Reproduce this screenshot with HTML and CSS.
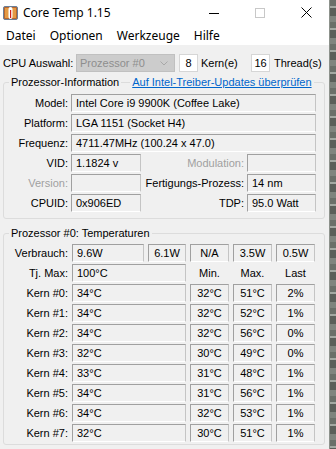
FILE: index.html
```html
<!DOCTYPE html>
<html lang="de">
<head>
    <meta charset="UTF-8">
    <meta name="viewport" content="width=device-width, initial-scale=1.0">
    <title>Core Temp 1.15</title>
    <link rel="stylesheet" href="styles.css">
</head>
<body>
    <div class="screen">
        <div class="window">
            <div class="titlebar">
                <svg class="app-icon" viewBox="0 0 15 16" width="15" height="16">
                    <rect x="0.5" y="1.5" width="14" height="13" rx="1.5" fill="#b8662e" stroke="#6a7f98"/>
                    <rect x="2" y="3" width="11" height="10" fill="#e49a44"/>
                    <rect x="5.5" y="2" width="4" height="12" rx="2" fill="#fff"/>
                    <rect x="7" y="5" width="1.2" height="8" fill="#d0201c"/>
                </svg>
                <span class="title">Core Temp 1.15</span>
                <div class="controls">
                    <span class="ctl">
                        <svg width="10" height="10" viewBox="0 0 10 10"><line x1="0" y1="5.5" x2="10" y2="5.5" stroke="#000" stroke-width="1"/></svg>
                    </span>
                    <span class="ctl">
                        <svg width="10" height="10" viewBox="0 0 10 10"><rect x="0.5" y="0.5" width="9" height="9" fill="none" stroke="#c8c8c8" stroke-width="1"/></svg>
                    </span>
                    <span class="ctl">
                        <svg width="11" height="11" viewBox="0 0 11 11"><path d="M0.5 0.5 L10.5 10.5 M10.5 0.5 L0.5 10.5" stroke="#000" stroke-width="1"/></svg>
                    </span>
                </div>
            </div>

            <div class="menubar">
                <span>Datei</span>
                <span>Optionen</span>
                <span>Werkzeuge</span>
                <span>Hilfe</span>
            </div>

            <div class="content">
                <div class="toolbar">
                    <span class="tb-label">CPU Auswahl:</span>
                    <div class="select">
                        <span>Prozessor #0</span>
                        <svg width="8" height="5" viewBox="0 0 8 5"><polyline points="0.5,0.5 4,4 7.5,0.5" fill="none" stroke="#a8a8a8" stroke-width="1"/></svg>
                    </div>
                    <span class="num">8</span>
                    <span class="tb-unit">Kern(e)</span>
                    <span class="num">16</span>
                    <span class="tb-unit2">Thread(s)</span>
                </div>

                <fieldset class="group info">
                    <legend>
                        <span class="legend-text">Prozessor-Information</span>
                        <span class="legend-rule"></span>
                        <a class="legend-link" href="#">Auf Intel-Treiber-Updates überprüfen</a>
                    </legend>
                    <div class="info-grid">
                        <span class="lbl">Model:</span>
                        <span class="box wide">Intel Core i9 9900K (Coffee Lake)</span>

                        <span class="lbl">Platform:</span>
                        <span class="box wide">LGA 1151 (Socket H4)</span>

                        <span class="lbl">Frequenz:</span>
                        <span class="box wide">4711.47MHz (100.24 x 47.0)</span>

                        <span class="lbl">VID:</span>
                        <span class="box">1.1824 v</span>
                        <span class="lbl off">Modulation:</span>
                        <span class="box"></span>

                        <span class="lbl off">Version:</span>
                        <span class="box"></span>
                        <span class="lbl">Fertigungs-Prozess:</span>
                        <span class="box">14 nm</span>

                        <span class="lbl">CPUID:</span>
                        <span class="box">0x906ED</span>
                        <span class="lbl">TDP:</span>
                        <span class="box">95.0 Watt</span>
                    </div>
                </fieldset>

                <fieldset class="group temps">
                    <legend><span class="legend-text">Prozessor #0: Temperaturen</span></legend>
                    <div class="temp-grid">
                        <span class="lbl">Verbrauch:</span>
                        <span class="box">9.6W</span>
                        <span class="box mid">6.1W</span>
                        <span class="box mid">N/A</span>
                        <span class="box mid">3.5W</span>
                        <span class="box mid">0.5W</span>

                        <span class="lbl">Tj. Max:</span>
                        <span class="box span2">100°C</span>
                        <span class="head">Min.</span>
                        <span class="head">Max.</span>
                        <span class="head">Last</span>

                        <span class="lbl">Kern #0:</span>
                        <span class="box span2">34°C</span>
                        <span class="box mid">32°C</span>
                        <span class="box mid">51°C</span>
                        <span class="box mid">2%</span>

                        <span class="lbl">Kern #1:</span>
                        <span class="box span2">34°C</span>
                        <span class="box mid">32°C</span>
                        <span class="box mid">52°C</span>
                        <span class="box mid">1%</span>

                        <span class="lbl">Kern #2:</span>
                        <span class="box span2">34°C</span>
                        <span class="box mid">32°C</span>
                        <span class="box mid">56°C</span>
                        <span class="box mid">0%</span>

                        <span class="lbl">Kern #3:</span>
                        <span class="box span2">32°C</span>
                        <span class="box mid">30°C</span>
                        <span class="box mid">49°C</span>
                        <span class="box mid">0%</span>

                        <span class="lbl">Kern #4:</span>
                        <span class="box span2">33°C</span>
                        <span class="box mid">31°C</span>
                        <span class="box mid">48°C</span>
                        <span class="box mid">1%</span>

                        <span class="lbl">Kern #5:</span>
                        <span class="box span2">34°C</span>
                        <span class="box mid">31°C</span>
                        <span class="box mid">56°C</span>
                        <span class="box mid">1%</span>

                        <span class="lbl">Kern #6:</span>
                        <span class="box span2">34°C</span>
                        <span class="box mid">32°C</span>
                        <span class="box mid">53°C</span>
                        <span class="box mid">1%</span>

                        <span class="lbl">Kern #7:</span>
                        <span class="box span2">32°C</span>
                        <span class="box mid">30°C</span>
                        <span class="box mid">51°C</span>
                        <span class="box mid">1%</span>
                    </div>
                </fieldset>
            </div>
        </div>
        <div class="desktop"></div>
    </div>
</body>
</html>
```

FILE: styles.css
```css
* {
    margin: 0;
    padding: 0;
    box-sizing: border-box;
}

body {
    width: 336px;
    height: 449px;
    overflow: hidden;
    font-family: 'Liberation Sans', Arial, sans-serif;
    font-size: 11px;
    color: #000;
    background-color: #555a54;
}

.screen {
    display: flex;
    height: 449px;
}

.window {
    width: 329px;
    display: flex;
    flex-direction: column;
    background-color: #f0f0f0;
}

.desktop {
    flex: 1;
    border-left: 1px solid #8d928c;
    background: repeating-linear-gradient(180deg,
        #6a6f69 0px, #6a6f69 6px,
        #a3a8a2 6px, #a3a8a2 8px,
        #5b5f5a 8px, #5b5f5a 16px,
        #7f847e 16px, #7f847e 22px);
}

/* title + menu */
.titlebar {
    height: 25px;
    background-color: #fff;
    display: flex;
    align-items: center;
    font-family: 'Noto Sans', sans-serif;
    font-size: 12px;
}

.app-icon {
    margin: 0 5px 0 3px;
}

.controls {
    margin-left: auto;
    display: flex;
    height: 100%;
}

.ctl {
    width: 46px;
    display: flex;
    align-items: center;
    justify-content: center;
}

.menubar {
    height: 20px;
    background-color: #fff;
    display: flex;
    align-items: center;
    gap: 14px;
    padding-left: 6px;
    font-family: 'Noto Sans', sans-serif;
    font-size: 12px;
}

.content {
    padding: 0 4px 0 3px;
}

/* cpu selection */
.toolbar {
    display: flex;
    align-items: center;
    height: 18px;
    margin-top: 9px;
    white-space: nowrap;
}

.tb-label {
    width: 73px;
}

.select {
    width: 99px;
    height: 18px;
    background-color: #cccccc;
    border: 1px solid #c0c0c0;
    display: flex;
    align-items: center;
    justify-content: space-between;
    padding: 0 6px 0 3px;
    color: #8e8e8e;
}

.num {
    width: 19px;
    height: 18px;
    margin-left: 4px;
    background-color: #fff;
    border: 1px solid #d6d6d6;
    display: flex;
    align-items: center;
    justify-content: center;
}

.tb-unit {
    width: 46px;
    margin-left: 3px;
}

.tb-unit2 {
    margin-left: 4px;
}

/* group boxes */
.group {
    min-width: 0;
    border: 1px solid #dcdcdc;
    border-radius: 3px;
    padding: 5px 8px 6px 0;
}

.group legend {
    display: flex;
    align-items: center;
    height: 14px;
    margin-left: 5px;
    white-space: nowrap;
    width: max-content;
}

.legend-text {
    padding: 0 2px;
    flex-shrink: 0;
}

.legend-rule {
    width: 9px;
    height: 1px;
    background-color: #dcdcdc;
    flex-shrink: 0;
}

.legend-link {
    color: #0066cc;
    text-decoration: underline;
    padding: 0 2px;
    flex-shrink: 0;
}

.info {
    margin-top: 3px;
}

.temps {
    margin-top: 7px;
    padding-top: 4px;
    padding-bottom: 2px;
}

.info-grid {
    display: grid;
    grid-template-columns: 64px 70px 100px 69px;
    grid-auto-rows: 18px;
    column-gap: 3px;
    row-gap: 2px;
}

.temp-grid {
    display: grid;
    grid-template-columns: 64px 72px 38px 39px 39px 39px;
    grid-auto-rows: 18px;
    column-gap: 4px;
    row-gap: 2px;
}

.lbl {
    text-align: right;
    align-self: center;
    white-space: nowrap;
}

.lbl.off {
    color: #a0a0a0;
}

.box {
    display: flex;
    align-items: center;
    padding-left: 4px;
    white-space: nowrap;
    border-style: solid;
    border-width: 1px;
    border-color: #a0a0a0 #c4c4c4 #ffffff #a0a0a0;
}

.box.wide {
    grid-column: 2 / 5;
}

.box.span2 {
    grid-column: 2 / 4;
}

.box.mid {
    justify-content: center;
    padding-left: 0;
}

.head {
    align-self: center;
    text-align: center;
}
```
